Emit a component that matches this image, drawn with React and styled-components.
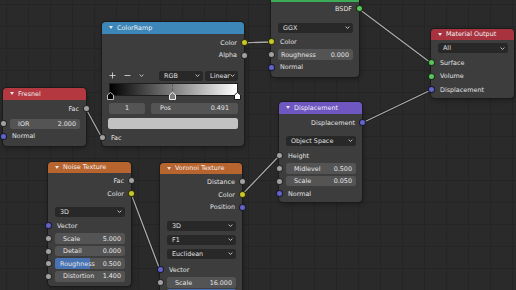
import React from 'react';
import styled, { createGlobalStyle } from 'styled-components';

const Global = createGlobalStyle`
  html, body { margin: 0; padding: 0; background: #2a2a2a; }
  body { font-family: "DejaVu Sans", "Liberation Sans", sans-serif; }
`;

const Canvas = styled.div`
  position: relative;
  width: 516px;
  height: 290px;
  overflow: hidden;
  background-color: #2a2a2a;
  background-image:
    linear-gradient(#252525 1px, transparent 1px),
    linear-gradient(90deg, #252525 1px, transparent 1px);
  background-size: 22px 22px;
  background-position: 6px 4px;
  font-family: "DejaVu Sans", "Liberation Sans", sans-serif;
  font-size: 6.4px;
  color: #e4e4e4;
`;

const Wires = styled.svg`
  position: absolute;
  left: 0;
  top: 0;
  pointer-events: none;
`;

const Node = styled.div`
  position: absolute;
  left: ${p => p.$x}px;
  top: ${p => p.$y}px;
  width: ${p => p.$w}px;
  background: #3d3d3d;
  border-radius: 4px;
  box-shadow: 0 0 0 1px #1b1b1b, 1px 2px 5px rgba(0, 0, 0, 0.35);
`;

const Header = styled.div`
  height: ${p => p.$h || 11.5}px;
  display: flex;
  align-items: center;
  gap: 4px;
  padding-left: 7px;
  background: ${p => p.$c};
  border-radius: 4px 4px 0 0;
  color: #f0f0f0;
`;

const Arrow = styled.span`
  width: 0;
  height: 0;
  border-left: 2.5px solid transparent;
  border-right: 2.5px solid transparent;
  border-top: 3px solid #e6e6e6;
`;

const Body = styled.div`
  display: flex;
  flex-direction: column;
  padding: ${p => p.$pt || 0}px 0 ${p => p.$pb || 0}px;
`;

const Spacer = styled.div`
  height: ${p => p.$h}px;
  flex: none;
`;

const Row = styled.div`
  position: relative;
  flex: none;
  height: ${p => p.$h || 12.6}px;
  display: flex;
  align-items: center;
  justify-content: ${p => (p.$out ? 'flex-end' : 'flex-start')};
  padding: ${p => (p.$out ? '0 7px 0 0' : '0 0 0 9px')};
`;

const FieldRow = styled.div`
  position: relative;
  flex: none;
  height: ${p => p.$h || 12.6}px;
  display: flex;
  align-items: center;
  gap: ${p => p.$gap || 0}px;
  padding: 0 6px 0 7px;
`;

const Socket = styled.span`
  position: absolute;
  top: 50%;
  ${p => (p.$out ? 'right: -3.5px;' : 'left: -3.5px;')}
  width: 7px;
  height: 7px;
  margin-top: -3.5px;
  box-sizing: border-box;
  border-radius: 50%;
  background: ${p => p.$c};
  border: 1px solid rgba(0, 0, 0, 0.75);
  z-index: 2;
`;

const SliderBox = styled.div`
  position: relative;
  flex: ${p => (p.$w ? `0 0 ${p.$w}px` : '1')};
  height: 10.5px;
  display: flex;
  align-items: center;
  justify-content: ${p => (p.$center ? 'center' : 'space-between')};
  padding: ${p => (p.$center ? '0' : `0 ${p.$pr || 4}px 0 ${p.$pl || 8}px`)};
  background: #545454;
  border-radius: 2.5px;
  overflow: hidden;
  color: #e6e6e6;
`;

const Fill = styled.span`
  position: absolute;
  left: 0;
  top: 0;
  bottom: 0;
  background: #4772b3;
`;

const SliderText = styled.span`
  position: relative;
  white-space: nowrap;
`;

const DropBox = styled.div`
  flex: ${p => (p.$w ? `0 0 ${p.$w}px` : '1')};
  height: 10px;
  display: flex;
  align-items: center;
  justify-content: space-between;
  padding: 0 3px 0 5px;
  background: #282828;
  border-radius: 2.5px;
  color: #e0e0e0;
`;

const Tools = styled.div`
  flex: none;
  height: 12px;
  display: flex;
  align-items: center;
  padding: 0 6px 0 3px;
`;

const ToolIcon = styled.span`
  width: 16px;
  display: flex;
  justify-content: center;
  align-items: center;
  color: #cfcfcf;
`;

const ToolGap = styled.span`
  width: ${p => p.$w}px;
  flex: none;
`;

const Ramp = styled.div`
  position: relative;
  flex: none;
  height: 11px;
  margin: 0 7px 0 8px;
  background: linear-gradient(90deg, #000, #fff);
  box-shadow: 0 0 0 1px #1e1e1e;
`;

const Marker = styled.svg`
  position: absolute;
  left: ${p => p.$pos}%;
  bottom: -5px;
  margin-left: -3.5px;
`;

const Dash = styled.span`
  position: absolute;
  left: ${p => p.$pos}%;
  top: 0;
  bottom: 0;
  border-left: 1px dashed rgba(90, 90, 90, 0.9);
`;

const Swatch = styled.div`
  flex: none;
  height: 11px;
  margin: 0 6px 0 6px;
  background: #c2c2c2;
  border-radius: 2.5px;
`;

const GRAY = '#a1a1a1';
const YEL = '#c7c729';
const VEC = '#6363c7';
const SHD = '#5bc25d';

const Caret = () => (
  <svg width="5" height="3" viewBox="0 0 5 3">
    <path d="M0.6 0.6 L2.5 2.4 L4.4 0.6" fill="none" stroke="#d0d0d0" strokeWidth="0.9" />
  </svg>
);

const Sock = ({ out, c, h, children }) => (
  <Row $out={out} $h={h}>
    {c && <Socket $c={c} $out={out} />}
    {children}
  </Row>
);

const Slider = ({ label, value, fill, c, h, pl }) => (
  <FieldRow $h={h}>
    {c && <Socket $c={c} />}
    <SliderBox $pl={pl}>
      {fill != null && <Fill style={{ width: `${fill}%` }} />}
      {label && <SliderText>{label}</SliderText>}
      {value && <SliderText>{value}</SliderText>}
    </SliderBox>
  </FieldRow>
);

const Drop = ({ label, h }) => (
  <FieldRow $h={h}>
    <DropBox>
      <span>{label}</span>
      <Caret />
    </DropBox>
  </FieldRow>
);

const Title = ({ c, children }) => (
  <Header $c={c}>
    <Arrow />
    {children && <span>{children}</span>}
  </Header>
);

const MarkerShape = ({ pos, fill, stroke }) => (
  <Marker $pos={pos} width="7" height="8" viewBox="0 0 7 8">
    <path d="M0.5 3 L3.5 0.5 L6.5 3 L6.5 7.5 L0.5 7.5 Z" fill={fill} stroke={stroke} strokeWidth="1" />
  </Marker>
);

const wires = [
  [359, 9, 431, 63],
  [244, 42.8, 271, 42],
  [86, 108.8, 102, 138],
  [362, 123, 431, 90],
  [131, 193.6, 160, 270],
  [242, 194.6, 279, 156],
];

export default function App() {
  return (
    <Canvas>
      <Global />
      <Wires width="516" height="290" viewBox="0 0 516 290">
        {wires.map(([x1, y1, x2, y2], i) => (
          <g key={i}>
            <line x1={x1} y1={y1} x2={x2} y2={y2} stroke="#1c1c1c" strokeWidth="2.6" strokeLinecap="round" />
            <line x1={x1} y1={y1} x2={x2} y2={y2} stroke="#ababab" strokeWidth="1.3" strokeLinecap="round" />
          </g>
        ))}
      </Wires>

      {/* Principled BSDF (header scrolled off the top) */}
      <Node $x={271} $y={-9.5} $w={88}>
        <Title c="#3cab55" />
        <Body $pt={0.7} $pb={3.5}>
          <Sock out c={SHD}>BSDF</Sock>
          <Spacer $h={6.4} />
          <Drop label="GGX" />
          <Spacer $h={1.4} />
          <Sock c={YEL}>Color</Sock>
          <Slider c={GRAY} label="Roughness" value="0.000" pl={3} />
          <Sock c={VEC}>Normal</Sock>
        </Body>
      </Node>

      {/* Material Output */}
      <Node $x={431} $y={28.5} $w={83}>
        <Title c="#a8333f">Material Output</Title>
        <Body $pt={2.2} $pb={1.5}>
          <Drop label="All" />
          <Spacer $h={1.4} />
          <Sock c={SHD} h={13.5}>Surface</Sock>
          <Sock c={SHD} h={13.5}>Volume</Sock>
          <Sock c={VEC} h={13.5}>Displacement</Sock>
        </Body>
      </Node>

      {/* ColorRamp */}
      <Node $x={102} $y={22} $w={142}>
        <Title c="#3d86b8">ColorRamp</Title>
        <Body $pt={3} $pb={2}>
          <Sock out c={YEL}>Color</Sock>
          <Sock out c={GRAY}>Alpha</Sock>
          <Spacer $h={8.3} />
          <Tools>
            <ToolIcon>
              <svg width="7" height="7" viewBox="0 0 7 7"><path d="M3.5 0.5 V6.5 M0.5 3.5 H6.5" stroke="#d0d0d0" strokeWidth="0.9" /></svg>
            </ToolIcon>
            <ToolIcon>
              <svg width="7" height="7" viewBox="0 0 7 7"><path d="M0.5 3.5 H6.5" stroke="#d0d0d0" strokeWidth="0.9" /></svg>
            </ToolIcon>
            <ToolIcon>
              <Caret />
            </ToolIcon>
            <ToolGap $w={10} />
            <DropBox $w={36}>
              <span>RGB</span>
              <Caret />
            </DropBox>
            <ToolGap $w={2} />
            <DropBox>
              <span>Linear</span>
              <Caret />
            </DropBox>
          </Tools>
          <Spacer $h={2} />
          <Ramp>
            <Dash $pos={49.1} />
            <MarkerShape pos={0} fill="#000" stroke="#bdbdbd" />
            <MarkerShape pos={49.1} fill="#7d7d7d" stroke="#f0f0f0" />
            <MarkerShape pos={100} fill="#fff" stroke="#1a1a1a" />
          </Ramp>
          <Spacer $h={8} />
          <FieldRow $h={11} $gap={6}>
            <SliderBox $w={36} $center>
              <SliderText>1</SliderText>
            </SliderBox>
            <SliderBox $pl={9} $pr={9}>
              <SliderText>Pos</SliderText>
              <SliderText>0.491</SliderText>
            </SliderBox>
          </FieldRow>
          <Spacer $h={4} />
          <Swatch />
          <Spacer $h={2.7} />
          <Sock c={GRAY}>Fac</Sock>
        </Body>
      </Node>

      {/* Fresnel */}
      <Node $x={3} $y={88} $w={83}>
        <Title c="#b3383f">Fresnel</Title>
        <Body $pt={3} $pb={3}>
          <Sock out c={GRAY}>Fac</Sock>
          <Spacer $h={2.5} />
          <Slider c={GRAY} label="IOR" value="2.000" />
          <Sock c={VEC}>Normal</Sock>
        </Body>
      </Node>

      {/* Displacement */}
      <Node $x={279} $y={102} $w={83}>
        <Title c="#6f57c2">Displacement</Title>
        <Body $pt={3.2} $pb={2}>
          <Sock out c={VEC}>Displacement</Sock>
          <Spacer $h={5.4} />
          <Drop label="Object Space" />
          <Spacer $h={2.4} />
          <Sock c={GRAY}>Height</Sock>
          <Slider c={GRAY} label="Midlevel" value="0.500" />
          <Slider c={GRAY} label="Scale" value="0.050" />
          <Sock c={VEC}>Normal</Sock>
        </Body>
      </Node>

      {/* Noise Texture */}
      <Node $x={48} $y={161.5} $w={83}>
        <Title c="#b8642e">Noise Texture</Title>
        <Body $pt={1.7} $pb={3}>
          <Sock out c={GRAY}>Fac</Sock>
          <Sock out c={YEL}>Color</Sock>
          <Spacer $h={5.8} />
          <Drop label="3D" />
          <Spacer $h={1.4} />
          <Sock c={VEC}>Vector</Sock>
          <Slider c={GRAY} label="Scale" value="5.000" />
          <Slider c={GRAY} label="Detail" value="0.000" />
          <Slider c={GRAY} label="Roughness" value="0.500" fill={50} pl={5} />
          <Slider c={GRAY} label="Distortion" value="1.400" />
        </Body>
      </Node>

      {/* Voronoi Texture */}
      <Node $x={160} $y={162.5} $w={82}>
        <Title c="#b8642e">Voronoi Texture</Title>
        <Body $pt={1.7} $pb={3}>
          <Sock out c={GRAY}>Distance</Sock>
          <Sock out c={YEL}>Color</Sock>
          <Sock out c={VEC}>Position</Sock>
          <Spacer $h={6.2} />
          <Drop label="3D" />
          <Spacer $h={1.4} />
          <Drop label="F1" />
          <Spacer $h={1.4} />
          <Drop label="Euclidean" />
          <Spacer $h={3.4} />
          <Sock c={VEC}>Vector</Sock>
          <Slider c={GRAY} label="Scale" value="16.000" />
          <Slider c={GRAY} fill={100} h={11.5} />
        </Body>
      </Node>
    </Canvas>
  );
}
